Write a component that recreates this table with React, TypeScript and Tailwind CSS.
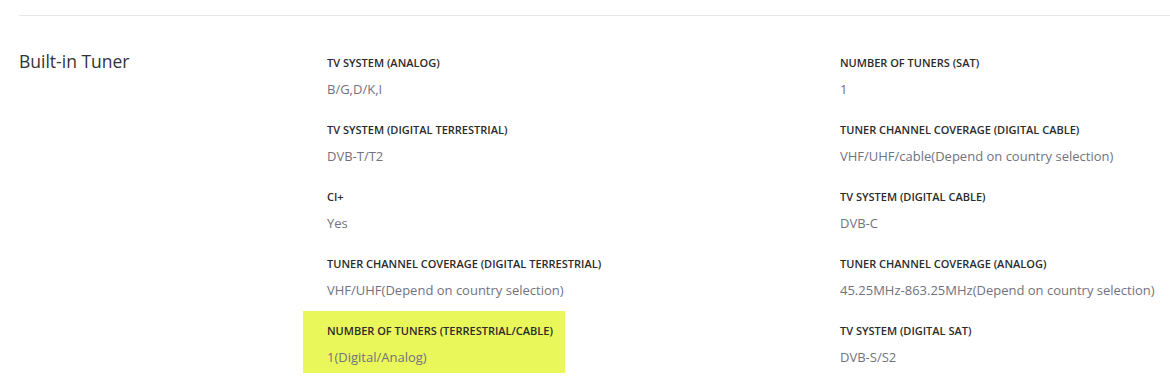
import React from "react";

type Spec = { label: string; value: string; highlight?: boolean };

const leftSpecs: Spec[] = [
  { label: "TV SYSTEM (ANALOG)", value: "B/G,D/K,I" },
  { label: "TV SYSTEM (DIGITAL TERRESTRIAL)", value: "DVB-T/T2" },
  { label: "CI+", value: "Yes" },
  { label: "TUNER CHANNEL COVERAGE (DIGITAL TERRESTRIAL)", value: "VHF/UHF(Depend on country selection)" },
  { label: "NUMBER OF TUNERS (TERRESTRIAL/CABLE)", value: "1(Digital/Analog)", highlight: true },
];

const rightSpecs: Spec[] = [
  { label: "NUMBER OF TUNERS (SAT)", value: "1" },
  { label: "TUNER CHANNEL COVERAGE (DIGITAL CABLE)", value: "VHF/UHF/cable(Depend on country selection)" },
  { label: "TV SYSTEM (DIGITAL CABLE)", value: "DVB-C" },
  { label: "TUNER CHANNEL COVERAGE (ANALOG)", value: "45.25MHz-863.25MHz(Depend on country selection)" },
  { label: "TV SYSTEM (DIGITAL SAT)", value: "DVB-S/S2" },
];

function SpecItem({ spec }: { spec: Spec }) {
  return (
    <div
      className={
        spec.highlight
          ? "mb-[5px] h-[62px] w-[262px] bg-[#eaf75a] pl-6 pt-[13px]"
          : "mb-[5px] h-[62px] pl-6 pt-[13px]"
      }
    >
      <div className="h-[14px] text-[11px] font-semibold leading-[14px] text-[#2b2b2b]">{spec.label}</div>
      <div className="mt-[9px] h-5 whitespace-nowrap text-[13px] leading-5 text-[#72727e]">{spec.value}</div>
    </div>
  );
}

export default function App() {
  return (
    <div
      className="h-[380px] w-[1170px] overflow-hidden bg-white pl-[19px] pt-[15px]"
      style={{ fontFamily: '"Open Sans", sans-serif' }}
    >
      <div className="h-px bg-[#e6e6e6]" />
      <div className="flex pt-[27px]">
        <h2 className="mt-[6px] w-[284px] shrink-0 text-[17.5px] leading-6 text-[#333]">Built-in Tuner</h2>
        <div className="grid flex-1 grid-cols-[513px_1fr]">
          <div className="flex flex-col items-start">
            {leftSpecs.map((s) => (
              <div key={s.label} className={s.highlight ? "" : "w-full"}>
                <SpecItem spec={s} />
              </div>
            ))}
          </div>
          <div className="flex flex-col">
            {rightSpecs.map((s) => (
              <SpecItem key={s.label} spec={s} />
            ))}
          </div>
        </div>
      </div>
    </div>
  );
}
